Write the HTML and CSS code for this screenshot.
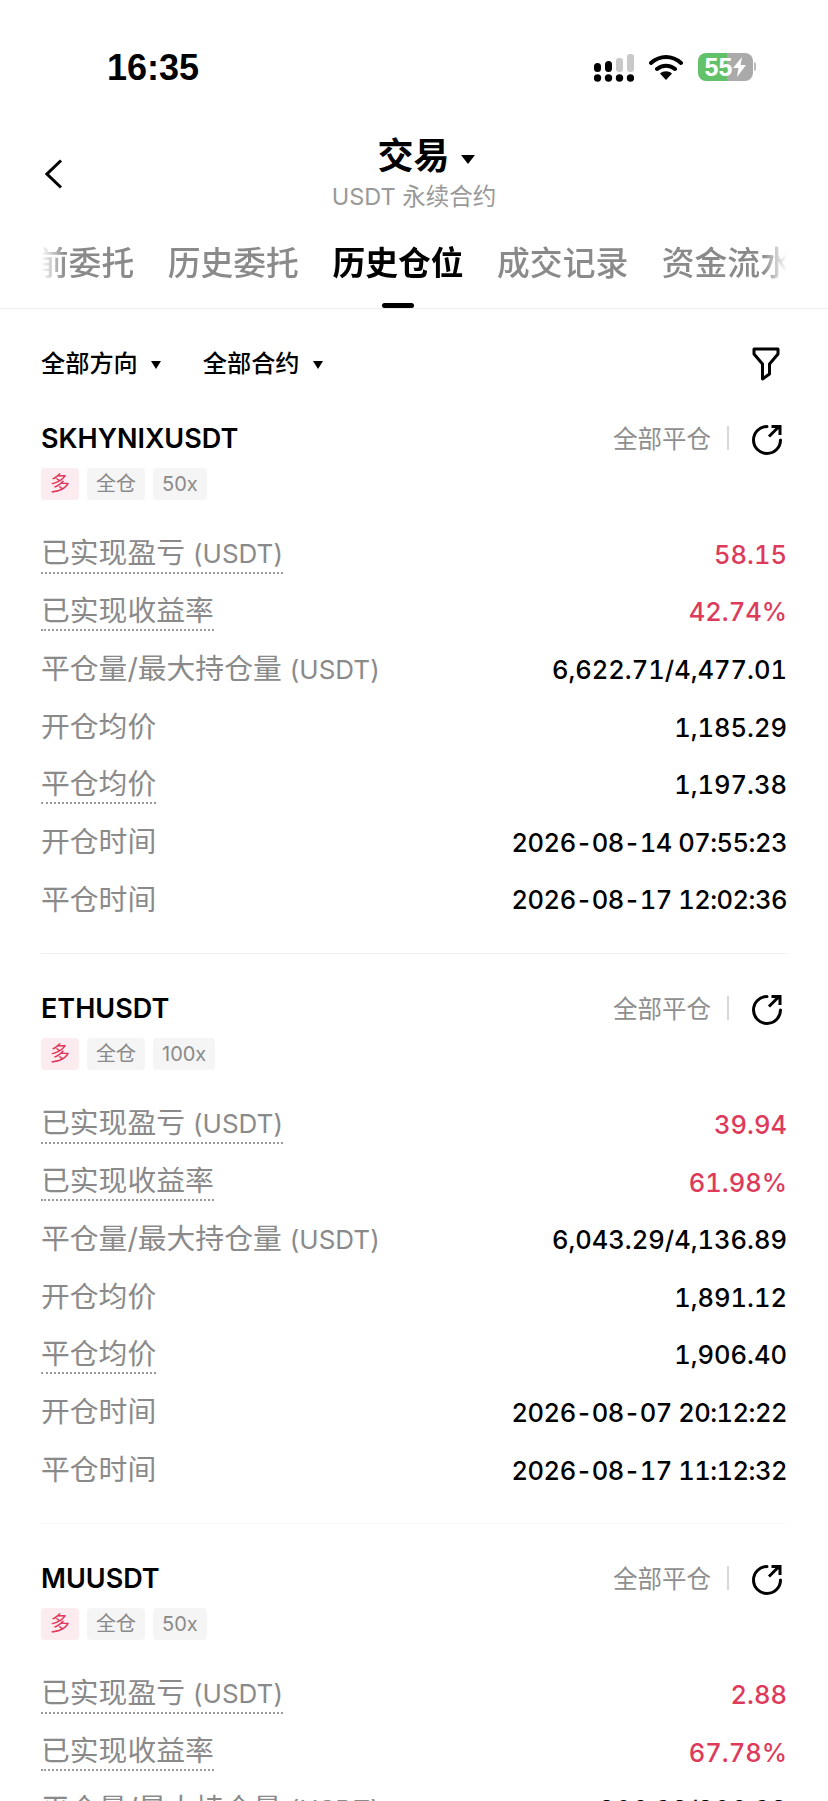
FILE: index.html
```html
<!DOCTYPE html>
<html lang="zh-CN">
<head>
    <meta charset="UTF-8">
    <meta name="viewport" content="width=device-width, initial-scale=1.0">
    <title>交易 - 历史仓位</title>
    <link rel="stylesheet" href="styles.css">
</head>
<body>

    <div class="page">
        <!-- Status bar -->
        <div class="status-bar">
            <span class="time">16:35</span>
            <div class="status-icons">
                <svg class="signal" width="40" height="30" viewBox="0 0 40 30">
                    <rect x="0" y="10" width="7" height="9" rx="3.5" fill="#000"/>
                    <rect x="11" y="8" width="7" height="11" rx="3.5" fill="#000"/>
                    <rect x="22" y="5" width="7" height="14" rx="3" fill="#c9c9c9"/>
                    <rect x="33" y="1" width="7" height="18" rx="3" fill="#c9c9c9"/>
                    <circle cx="3.5" cy="25" r="3.7" fill="#000"/>
                    <circle cx="14.5" cy="25" r="3.7" fill="#000"/>
                    <circle cx="25.5" cy="25" r="3.7" fill="#000"/>
                    <circle cx="36.5" cy="25" r="3.7" fill="#000"/>
                </svg>
                <svg class="wifi" width="34" height="26" viewBox="0 0 34 26">
                    <path d="M2 9 C11 1 23 1 32 9 M8 15 C13 10.500 21 10.500 26 15" fill="none" stroke="#000" stroke-width="4" stroke-linecap="round"/>
                    <path d="M17 26 L11 19.500 C14.500 16.500 19.500 16.500 23 19.500 Z" fill="#000"/>
                </svg>
                <div class="battery">
                    <div class="battery-body">
                        <span class="battery-num">55</span>
                        <svg class="bolt" width="13" height="20" viewBox="0 0 13 20">
                            <path d="M9 0 L0 11 H5.500 L4 20 L13 8 H7.500 Z" fill="#fff"/>
                        </svg>
                    </div>
                    <span class="battery-nub"></span>
                </div>
            </div>
        </div>

        <!-- Title -->
        <div class="title-bar">
            <svg class="back" width="18" height="30" viewBox="0 0 18 30">
                <path d="M16 1.500 L2 15 L16 28.500" fill="none" stroke="#000" stroke-width="3"/>
            </svg>
            <div class="title">交易<span class="caret caret-big"></span></div>
            <div class="subtitle">USDT 永续合约</div>
        </div>

        <!-- Tabs -->
        <div class="tabs">
            <div class="tabs-inner">
                <span class="tab">当前委托</span>
                <span class="tab">历史委托</span>
                <span class="tab active">历史仓位</span>
                <span class="tab">成交记录</span>
                <span class="tab">资金流水</span>
            </div>
        </div>

        <!-- Filters -->
        <div class="filters">
            <span class="filter">全部方向<span class="caret"></span></span>
            <span class="filter">全部合约<span class="caret"></span></span>
            <svg class="funnel" width="28" height="34" viewBox="0 0 28 34">
                <path d="M2 2 H26 V7 L17.500 17 V27 L10.500 32 V17 L2 7 Z" fill="none" stroke="#000" stroke-width="3" stroke-linejoin="round"/>
            </svg>
        </div>

        <!-- Position 1 -->
        <div class="card">
            <div class="card-head">
                <span class="symbol">SKHYNIXUSDT</span>
                <span class="close-all">全部平仓</span>
                <span class="vline"></span>
                <svg class="share" width="32" height="32" viewBox="0 0 32 32">
                    <path d="M16 2.500 A13.500 13.500 0 1 0 29.500 16" fill="none" stroke="#000" stroke-width="3" stroke-linecap="round"/>
                    <path d="M18 12.500 L28 2.500 M20.500 2.500 H29 V11" fill="none" stroke="#000" stroke-width="3"/>
                </svg>
            </div>
            <div class="tags">
                <span class="tag long">多</span>
                <span class="tag">全仓</span>
                <span class="tag">50x</span>
            </div>
            <div class="rows">
                <div class="row"><span class="label dotted">已实现盈亏 <span class="unit">(USDT)</span></span><span class="value red">58.15</span></div>
                <div class="row"><span class="label dotted">已实现收益率</span><span class="value red">42.74%</span></div>
                <div class="row"><span class="label">平仓量/最大持仓量 <span class="unit">(USDT)</span></span><span class="value">6,622.71/4,477.01</span></div>
                <div class="row"><span class="label">开仓均价</span><span class="value">1,185.29</span></div>
                <div class="row"><span class="label dotted">平仓均价</span><span class="value">1,197.38</span></div>
                <div class="row"><span class="label">开仓时间</span><span class="value date">2026-08-14 07:55:23</span></div>
                <div class="row"><span class="label">平仓时间</span><span class="value date">2026-08-17 12:02:36</span></div>
            </div>
        </div>

        <!-- Position 2 -->
        <div class="card">
            <div class="card-head">
                <span class="symbol">ETHUSDT</span>
                <span class="close-all">全部平仓</span>
                <span class="vline"></span>
                <svg class="share" width="32" height="32" viewBox="0 0 32 32">
                    <path d="M16 2.500 A13.500 13.500 0 1 0 29.500 16" fill="none" stroke="#000" stroke-width="3" stroke-linecap="round"/>
                    <path d="M18 12.500 L28 2.500 M20.500 2.500 H29 V11" fill="none" stroke="#000" stroke-width="3"/>
                </svg>
            </div>
            <div class="tags">
                <span class="tag long">多</span>
                <span class="tag">全仓</span>
                <span class="tag">100x</span>
            </div>
            <div class="rows">
                <div class="row"><span class="label dotted">已实现盈亏 <span class="unit">(USDT)</span></span><span class="value red">39.94</span></div>
                <div class="row"><span class="label dotted">已实现收益率</span><span class="value red">61.98%</span></div>
                <div class="row"><span class="label">平仓量/最大持仓量 <span class="unit">(USDT)</span></span><span class="value">6,043.29/4,136.89</span></div>
                <div class="row"><span class="label">开仓均价</span><span class="value">1,891.12</span></div>
                <div class="row"><span class="label dotted">平仓均价</span><span class="value">1,906.40</span></div>
                <div class="row"><span class="label">开仓时间</span><span class="value date">2026-08-07 20:12:22</span></div>
                <div class="row"><span class="label">平仓时间</span><span class="value date">2026-08-17 11:12:32</span></div>
            </div>
        </div>

        <!-- Position 3 -->
        <div class="card">
            <div class="card-head">
                <span class="symbol">MUUSDT</span>
                <span class="close-all">全部平仓</span>
                <span class="vline"></span>
                <svg class="share" width="32" height="32" viewBox="0 0 32 32">
                    <path d="M16 2.500 A13.500 13.500 0 1 0 29.500 16" fill="none" stroke="#000" stroke-width="3" stroke-linecap="round"/>
                    <path d="M18 12.500 L28 2.500 M20.500 2.500 H29 V11" fill="none" stroke="#000" stroke-width="3"/>
                </svg>
            </div>
            <div class="tags">
                <span class="tag long">多</span>
                <span class="tag">全仓</span>
                <span class="tag">50x</span>
            </div>
            <div class="rows">
                <div class="row"><span class="label dotted">已实现盈亏 <span class="unit">(USDT)</span></span><span class="value red">2.88</span></div>
                <div class="row"><span class="label dotted">已实现收益率</span><span class="value red">67.78%</span></div>
                <div class="row"><span class="label">平仓量/最大持仓量 <span class="unit">(USDT)</span></span><span class="value">306.98/306.98</span></div>
            </div>
        </div>
    </div>

</body>
</html>
```

FILE: styles.css
```css
html, body {
    margin: 0;
    padding: 0;
    background-color: #fff;
}

body {
    font-family: Inter, "Noto Sans CJK SC", sans-serif;
    color: #000;
}

.page {
    width: 828px;
    height: 1801px;
    overflow: hidden;
}

/* status bar */
.status-bar {
    height: 134px;
    padding: 46px 72px 0 107px;
    box-sizing: border-box;
    display: flex;
    justify-content: space-between;
    align-items: flex-start;
}

.time {
    font-family: "Liberation Sans", sans-serif;
    font-size: 36px;
    font-weight: bold;
    line-height: 44px;
}

.status-icons {
    display: flex;
    align-items: center;
    padding-top: 4px;
}

.signal {
    margin-right: 15px;
    margin-top: 3px;
}

.wifi {
    margin-right: 15px;
}

.battery {
    display: flex;
    align-items: center;
}

.battery-body {
    width: 55px;
    height: 28px;
    border-radius: 8px;
    background: linear-gradient(to right, #63c16a 53%, #aaaaaa 53%);
    display: flex;
    align-items: center;
    justify-content: center;
    gap: 1px;
}

.battery-num {
    color: #fff;
    font-family: "Liberation Sans", sans-serif;
    font-size: 25px;
    font-weight: bold;
    line-height: 28px;
}

.battery-nub {
    width: 2px;
    height: 9px;
    margin-left: 1px;
    border-radius: 0 2px 2px 0;
    background-color: #bbb;
}

/* title */
.title-bar {
    height: 107px;
    position: relative;
    text-align: center;
}

.back {
    position: absolute;
    left: 45px;
    top: 25px;
}

.title {
    font-size: 36px;
    font-weight: bold;
    line-height: 44px;
    padding-left: 24px;
}

.subtitle {
    margin-top: 3px;
    color: #999;
    font-size: 23.500px;
    line-height: 32px;
}

.caret {
    display: inline-block;
    width: 0;
    height: 0;
    margin-left: 13px;
    vertical-align: middle;
    border-left: 5px solid transparent;
    border-right: 5px solid transparent;
    border-top: 8px solid #000;
}

.caret-big {
    margin-left: 11px;
    border-left-width: 7px;
    border-right-width: 7px;
    border-top-width: 9px;
}

/* tabs */
.tabs {
    height: 67px;
    margin: 0 41px;
    overflow: hidden;
    -webkit-mask-image: linear-gradient(to right, transparent 0, #000 24px, #000 calc(100% - 24px), transparent 100%);
    mask-image: linear-gradient(to right, transparent 0, #000 24px, #000 calc(100% - 24px), transparent 100%);
}

.tabs-inner {
    display: flex;
    gap: 33.500px;
    margin-left: -38px;
    width: 900px;
}

.tab {
    height: 67px;
    color: #8a8a8a;
    font-size: 32.800px;
    font-weight: 500;
    line-height: 44px;
    position: relative;
    white-space: nowrap;
}

.tab.active {
    color: #000;
    font-weight: bold;
}

.tab.active::after {
    content: "";
    position: absolute;
    left: 50%;
    bottom: 0;
    width: 32px;
    height: 5px;
    margin-left: -16px;
    border-radius: 3px;
    background-color: #000;
}

/* filters */
.filters {
    height: 105px;
    padding: 0 41px;
    box-sizing: border-box;
    border-top: 1px solid #eeeeee;
    display: flex;
    align-items: center;
    gap: 42px;
}

.filter {
    font-size: 24.200px;
    font-weight: 500;
}

.funnel {
    margin-left: auto;
    margin-right: 7px;
    margin-top: 6px;
}

/* position card */
.card {
    box-sizing: border-box;
    margin: 0 41px;
    padding-top: 9px;
    padding-bottom: 24.500px;
}

.card + .card {
    padding-top: 38px;
    border-top: 1px solid #f0f0f0;
}

.card:last-child {
    border-top-color: #f8f8f8;
}

.card-head {
    height: 32px;
    display: flex;
    align-items: center;
}

.symbol {
    margin-right: auto;
    font-size: 27px;
    font-weight: 600;
}

.close-all {
    padding-bottom: 2px;
    color: #8f8f8f;
    font-size: 24.500px;
}

.vline {
    width: 2px;
    height: 24px;
    margin: 0 22px 0 16px;
    background-color: #d8d8d8;
}

.share {
    margin-right: 4px;
    margin-top: 4px;
}

.tags {
    margin-top: 14px;
    display: flex;
    gap: 8px;
}

.tag {
    height: 32px;
    padding: 0 9px;
    border-radius: 4px;
    background-color: #f5f5f5;
    color: #8a8a8a;
    font-size: 20px;
    line-height: 32px;
}

.tag.long {
    background-color: #fdecef;
    color: #e0395f;
}

.rows {
    margin-top: 25.500px;
}

.row {
    height: 57.600px;
    display: flex;
    justify-content: space-between;
    align-items: center;
}

.label {
    color: #8a8a8a;
    font-size: 28.800px;
    line-height: 36px;
}

.label .unit {
    font-size: 26px;
}

.label.dotted {
    border-bottom: 2px dotted #9a9a9a;
}

.value {
    font-size: 25.500px;
    font-weight: 500;
    font-variant-numeric: tabular-nums;
}

.value.date {
    letter-spacing: -0.5px;
}

.value.red {
    color: #dd3a5c;
}
```
